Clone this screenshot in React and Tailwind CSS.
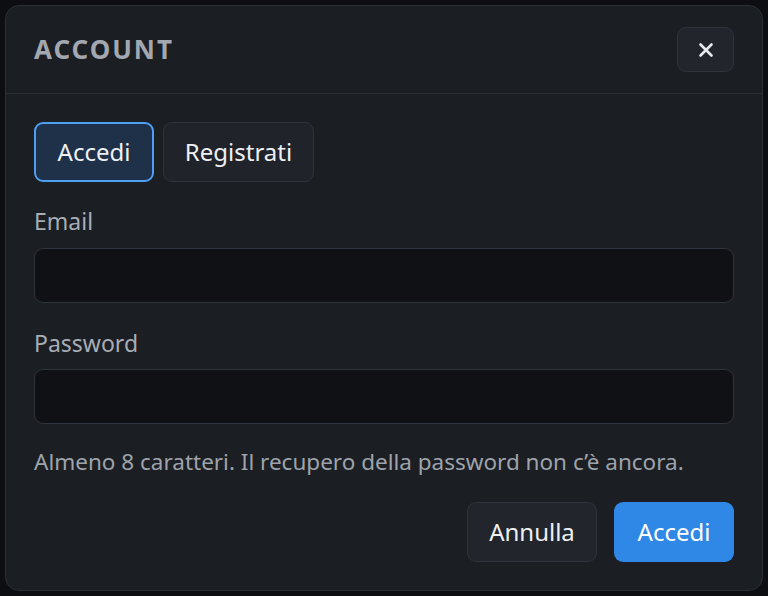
import React from "react";

export default function App() {
  const font = { fontFamily: '"Noto Sans", "Open Sans", sans-serif' };
  return (
    <div className="w-[768px] h-[596px] bg-[#0c0e12] p-[5px]" style={font}>
      <div className="h-full flex flex-col rounded-[14px] border border-[#2b2f37] bg-[#1b1e23]">
        <div className="h-[88px] shrink-0 flex items-center justify-between pl-[28px] pr-[28px] border-b border-[#2b2f37]">
          <h2 className="text-[26px] font-bold tracking-[0.075em] text-[#a3a8b0]">ACCOUNT</h2>
          <button className="w-[57px] h-[45px] rounded-[9px] border border-[#2f333b] bg-[#22252c] flex items-center justify-center text-[#e8eaed]">
            <svg width="16" height="16" viewBox="0 0 16 16" fill="none" stroke="currentColor" strokeWidth="2.6" strokeLinecap="round">
              <path d="M2.5 2.5 L13.5 13.5 M13.5 2.5 L2.5 13.5" />
            </svg>
          </button>
        </div>
        <div className="flex flex-col px-[28px] pt-[28px]">
          <div className="flex gap-[9px]">
            <button className="h-[60px] w-[120px] rounded-[9px] border-2 border-[#4f9ef0] bg-[#1f3149] text-[24px] text-[#eef0f3]">Accedi</button>
            <button className="h-[60px] w-[151px] rounded-[9px] border border-[#2f333b] bg-[#202329] text-[24px] text-[#eef0f3]">Registrati</button>
          </div>
          <label className="mt-[23px] text-[23px] leading-[32px] text-[#a8adb5]">Email</label>
          <input className="mt-[11px] h-[55px] w-full rounded-[9px] border border-[#2f333b] bg-[#0f1115] outline-none" />
          <label className="mt-[24px] text-[23px] leading-[32px] text-[#a8adb5]">Password</label>
          <input type="password" className="mt-[10px] h-[55px] w-full rounded-[9px] border border-[#2f333b] bg-[#0f1115] outline-none" />
          <p className="mt-[23px] text-[22.5px] leading-[30px] text-[#9ea3ab]">Almeno 8 caratteri. Il recupero della password non c’è ancora.</p>
          <div className="mt-[25px] flex justify-end gap-[17px]">
            <button className="h-[60px] w-[130px] rounded-[9px] border border-[#2f333b] bg-[#22252c] text-[24px] text-[#eef0f3]">Annulla</button>
            <button className="h-[60px] w-[120px] rounded-[9px] bg-[#2f87e6] text-[24px] text-white">Accedi</button>
          </div>
        </div>
      </div>
    </div>
  );
}
